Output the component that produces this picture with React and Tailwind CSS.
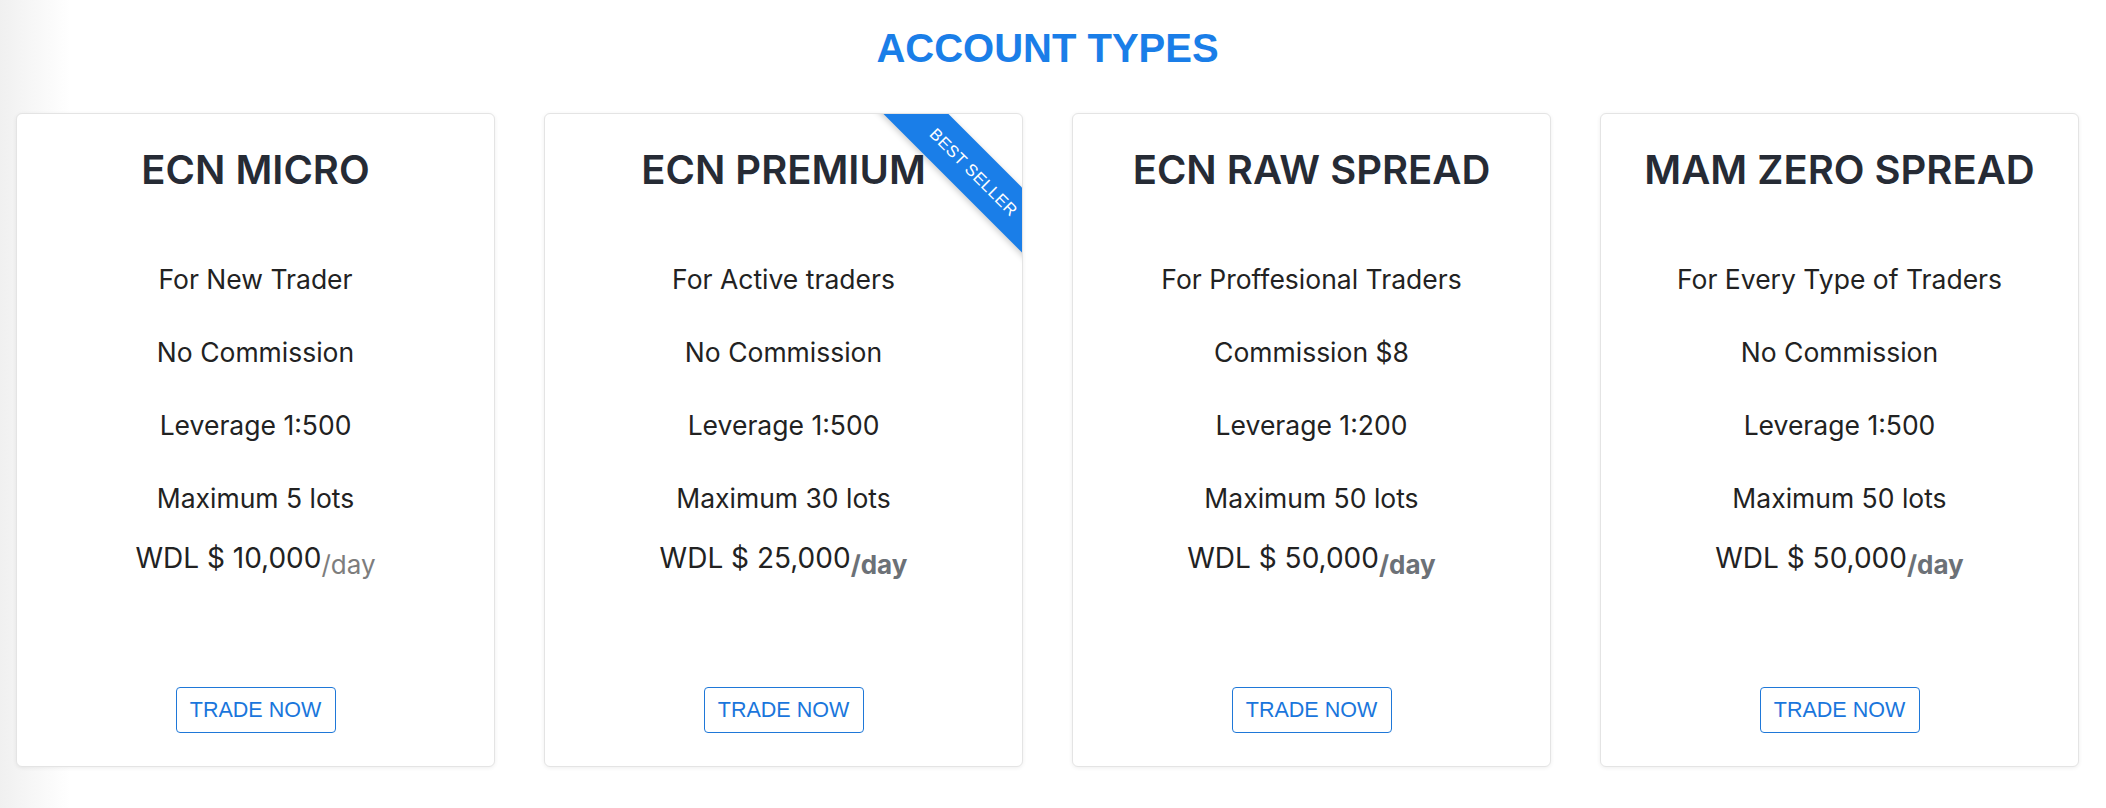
import React from "react";

const plans = [
  {
    name: "ECN MICRO",
    lines: ["For New Trader", "No Commission", "Leverage 1:500", "Maximum 5 lots"],
    wdl: "10,000",
    boldDay: false,
  },
  {
    name: "ECN PREMIUM",
    lines: ["For Active traders", "No Commission", "Leverage 1:500", "Maximum 30 lots"],
    wdl: "25,000",
    boldDay: true,
    ribbon: true,
  },
  {
    name: "ECN RAW SPREAD",
    lines: ["For Proffesional Traders", "Commission $8", "Leverage 1:200", "Maximum 50 lots"],
    wdl: "50,000",
    boldDay: true,
  },
  {
    name: "MAM ZERO SPREAD",
    lines: ["For Every Type of Traders", "No Commission", "Leverage 1:500", "Maximum 50 lots"],
    wdl: "50,000",
    boldDay: true,
  },
];

function PlanCard({ plan }) {
  return (
    <div className="relative flex h-[654px] w-[479px] flex-col items-center overflow-hidden rounded-[6px] border border-[#e4e4e4] bg-white pb-[33px] shadow-[0_1px_4px_rgba(0,0,0,0.07)] font-['Inter',sans-serif]">
      {plan.ribbon && (
        <div className="absolute right-[-84px] top-[37px] flex h-[46px] w-[260px] rotate-45 items-center justify-center bg-[#1a7ee8] shadow-[0_2px_6px_rgba(0,0,0,0.2)]">
          <span className="pr-[6px] text-[16.5px] uppercase leading-[20px] tracking-[0.5px] text-white font-['Liberation_Sans',sans-serif]">
            Best Seller
          </span>
        </div>
      )}
      <h2 className="mt-[32px] text-[40px] font-semibold leading-[48px] text-[#262b35]">{plan.name}</h2>
      <div className="mt-[65px] flex flex-col items-center gap-[33px] text-[26.5px] leading-[40px] text-[#222]">
        {plan.lines.map((l) => (
          <div key={l}>{l}</div>
        ))}
      </div>
      <div className="mt-[20px] text-[28px] leading-[40px] text-[#222]">
        WDL $ {plan.wdl}
        <span
          className={
            plan.boldDay
              ? "align-[-6px] text-[26px] font-bold text-[#6c7177]"
              : "align-[-6px] text-[26px] text-[#7d7d7d]"
          }
        >
          /day
        </span>
      </div>
      <button className="mt-auto h-[46px] w-[160px] rounded-[4px] border border-[#1f78d8] bg-white text-[21.5px] text-[#1a76dc] font-['Liberation_Sans',sans-serif]">
        TRADE NOW
      </button>
    </div>
  );
}

export default function App() {
  return (
    <div className="min-h-screen bg-[linear-gradient(to_right,#f0f0f0,#ffffff_70px)] pl-4 pr-[27px]">
      <h1 className="pt-[25px] text-center text-[40px] font-bold leading-[46px] text-[#1a7ee8] font-['Liberation_Sans',sans-serif]">
        ACCOUNT TYPES
      </h1>
      <div className="mt-[42px] flex gap-[49px]">
        {plans.map((p) => (
          <PlanCard key={p.name} plan={p} />
        ))}
      </div>
    </div>
  );
}
